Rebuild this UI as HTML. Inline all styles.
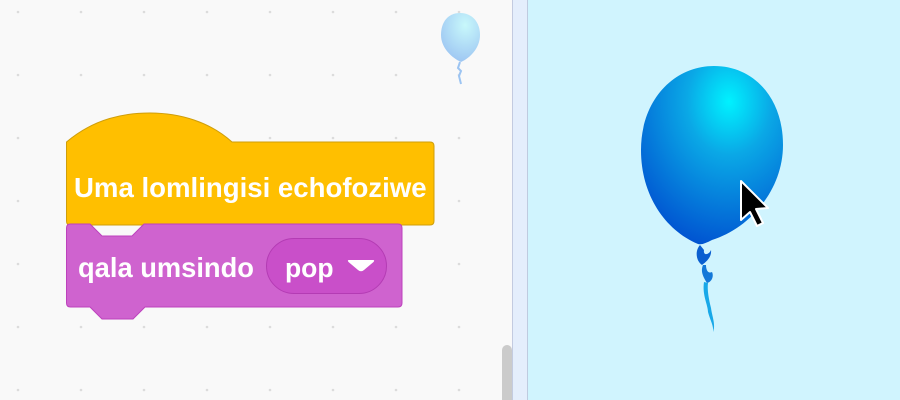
<!DOCTYPE html>
<html><head><style>
html,body{margin:0;padding:0}
body{width:900px;height:400px;position:relative;overflow:hidden;background:#f9f9f9;font-family:"Liberation Sans",sans-serif}
</style></head><body>
<svg width="900" height="400" style="position:absolute;left:0;top:0">
<defs>
<pattern id="dots" x="16" y="10" width="63" height="63" patternUnits="userSpaceOnUse">
<circle cx="2" cy="2" r="1.3" fill="#dcdcdc"/>
</pattern>
<radialGradient id="bg1" cx="0.62" cy="0.2" r="0.85">
<stop offset="0" stop-color="#00f2ff"/>
<stop offset="0.35" stop-color="#0aa8e6"/>
<stop offset="1" stop-color="#0050d0"/>
</radialGradient>
<radialGradient id="bg2" cx="0.62" cy="0.25" r="0.8">
<stop offset="0" stop-color="#c8f8fb"/>
<stop offset="1" stop-color="#9cc4f2"/>
</radialGradient>
</defs>
<rect x="0" y="0" width="512" height="400" fill="url(#dots)"/>
<path d="M460 13 C472 13 480 22 480 35 C480 48 470 58 461 62 C452 58 441 48 441 35 C441 22 448 13 460 13Z" fill="url(#bg2)"/>
<path d="M460 62 l-2 6 l3 3 l-2 5 l2 8" stroke="#9cc4f2" stroke-width="2" fill="none"/>
<rect x="502" y="345" width="10" height="70" rx="5" fill="#cbcbcb"/>
<rect x="512" y="0" width="1" height="400" fill="#c3cbe0"/>
<rect x="513" y="0" width="14" height="400" fill="#e4eefc"/>
<rect x="527" y="0" width="1" height="400" fill="#bfcbe0"/>
<rect x="528" y="0" width="372" height="400" fill="#d0f4fe"/>
<path d="M66.5 142 C95 118 125 113 150 113 C180 113 210 122 232 142 L430 142 Q434 142 434 146 L434 221 Q434 225 430 225 L70 225 Q66.5 225 66.5 221 Z" fill="#ffbf00" stroke="#cf9e0a" stroke-width="1"/>
<path d="M66.5 228 Q66.5 224 70.5 224 L90 224 L102 236 L132 236 L144 224 L398 224 Q402 224 402 228 L402 303 Q402 307 398 307 L145 307 L133 319 L102 319 L90 307 L70.5 307 Q66.5 307 66.5 303 Z" fill="#cf63cf" stroke="#bd42bd" stroke-width="1"/>
<rect x="266.5" y="238.5" width="120" height="55" rx="27.5" fill="#c94fc9" stroke="#b43cb4" stroke-width="1"/>
<path d="M349 260 L373 260 Q375 260 373.5 262 L364 270 Q361 272.5 358 270 L348.5 262 Q347 260 349 260Z" fill="#fff"/>
<text x="74" y="197" font-family="Liberation Sans, sans-serif" font-weight="bold" font-size="27.6" fill="#fff">Uma lomlingisi echofoziwe</text>
<text x="78" y="277" font-family="Liberation Sans, sans-serif" font-weight="bold" font-size="27.3" fill="#fff">qala umsindo</text>
<text x="285" y="277" font-family="Liberation Sans, sans-serif" font-weight="bold" font-size="26.5" fill="#fff">pop</text>
<path d="M714 66 C754 66 783 98 783 145 C783 190 750 228 712 240 C706 243 702 245 698 244 C665 230 641 195 641 150 C641 100 674 66 714 66Z" fill="url(#bg1)"/>
<path d="M700 245 C694 252 697 262 702 265 C706 262 712 257 711 250 C709 255 703 256 704 250Z" fill="#0a5fd0"/>
<path d="M703 265 C700 272 704 278 707 283 C712 282 714 276 712 272 C708 274 706 270 706 265Z" fill="#1478d8"/>
<path d="M704 282 C702 295 708 305 708 312 C710 320 714 326 713 332 C716 325 712 316 711 308 C709 300 707 290 708 283Z" fill="#18a8e8"/>
<path d="M741 181 L741 220 L750 212 L757 226 L763 223 L756 209 L768 208 Z" fill="#000" stroke="#fff" stroke-width="2" stroke-linejoin="round"/>
</svg>
</body></html>
